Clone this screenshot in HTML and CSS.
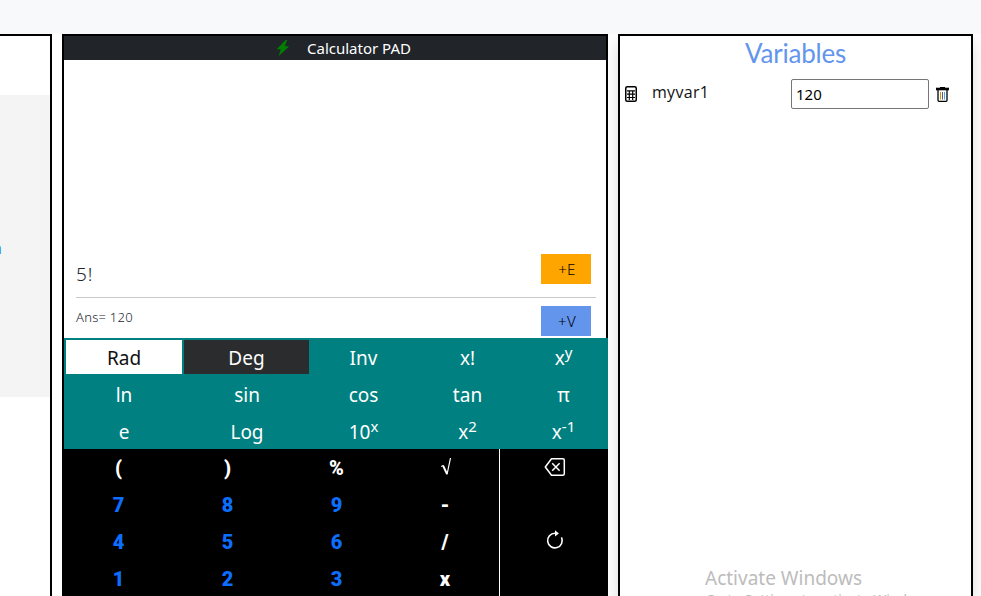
FILE: index.html
```html
<!DOCTYPE html>
<html lang="en">
<head>
<meta charset="utf-8">
<title>Calculator PAD</title>
<link rel="stylesheet" href="styles.css">
</head>
<body>
<header class="topbar"></header>
<main class="workspace">
  <section class="side-panel"><div class="side-block"><span>n</span></div></section>
  <section class="pad">
    <div class="pad-title">
      <svg class="bolt" width="14" height="16" viewBox="0 0 14 16"><path d="M9.6 0 .8 9.200h4L2.700 16 13.200 6.300H8.700L11.200 0z" fill="#008000"/></svg>
      <span>Calculator PAD</span>
    </div>
    <div class="screen">
      <div class="line expression"><span class="expr-text">5!</span><button class="add add-e">+E</button></div>
      <div class="line answer"><span class="ans-text">Ans= 120</span><button class="add add-v">+V</button></div>
    </div>
    <div class="functions">
      <div class="rad">Rad</div><div class="deg">Deg</div><div>Inv</div><div>x!</div><div><span>x<sup>y</sup></span></div>
      <div>ln</div><div>sin</div><div>cos</div><div>tan</div><div>π</div>
      <div>e</div><div>Log</div><div><span>10<sup>x</sup></span></div><div><span>x<sup>2</sup></span></div><div><span>x<sup>-1</sup></span></div>
    </div>
    <div class="keypad">
      <div class="keys">
        <div>(</div><div>)</div><div>%</div>
        <div class="root"><svg width="12" height="20" viewBox="0 0 12 20" fill="none" stroke="#fff"><path d="M1 9.500 3 8.500" stroke-width="1"/><path d="M3 8.500 7 17" stroke-width="1.900"/><path d="M7 17.500 10.500 1" stroke-width="1.200"/></svg></div>
        <div class="num">7</div><div class="num">8</div><div class="num">9</div><div>-</div>
        <div class="num">4</div><div class="num">5</div><div class="num">6</div><div>/</div>
        <div class="num">1</div><div class="num">2</div><div class="num">3</div><div>x</div>
      </div>
      <div class="actions">
        <div><svg width="22" height="20" viewBox="0 0 22 20" fill="none" stroke="#fff" stroke-width="1.500"><path d="M7.500 1.700h11.300q1.500 0 1.500 1.500v13.600q0 1.500-1.500 1.500H7.500L1.300 10z" stroke-linejoin="round"/><path d="m8.200 6.200 7.400 7.600m0-7.600-7.400 7.600"/></svg></div>
        <div><svg width="20" height="20" viewBox="0 0 20 20"><path d="M10 3.300a7.300 7.300 0 1 0 6.500 4.100" fill="none" stroke="#fff" stroke-width="1.600"/><path d="M10 .2v6.400l3.900-3.200z" fill="#fff"/></svg></div>
      </div>
    </div>
  </section>
  <section class="variables">
    <h2>Variables</h2>
    <div class="var-row">
      <svg width="12" height="16" viewBox="0 0 12 16"><rect x=".75" y=".75" width="10.500" height="14.500" rx="1.500" fill="#fff" stroke="#000" stroke-width="1.500"/><path d="M2 4.800h8M2 8.200h8M2 11.500h8M4.300 5v9M7.700 5v9" stroke="#000" stroke-width="1.200"/></svg>
      <span class="var-name">myvar1</span>
      <input type="text" value="120">
      <svg width="13" height="15" viewBox="0 0 13 15" fill="none" stroke="#000"><path d="M0 2h13" stroke-width="2.600"/><path d="M4 .6h5" stroke-width="1.200"/><path d="M2 3v10.200q0 1.100 1 1.100h7q1 0 1-1.100V3" stroke-width="1.300"/><path d="M4.500 5v7.500" stroke="#d48a20"/><path d="M6.500 5v7.500" stroke="#47608c"/><path d="M8.500 5v7.500" stroke="#45a5e6"/></svg>
    </div>
  </section>
</main>
<aside class="watermark"><div class="wm-title">Activate Windows</div><div class="wm-sub">Go to Settings to activate Windows.</div></aside>
</body>
</html>
```
FILE: styles.css
```css
* { box-sizing: border-box; }
body { margin: 0; height: 596px; overflow: hidden; background: #fff; color: #212529; font-family: "Noto Sans", "Open Sans", sans-serif; }
.topbar { height: 34px; background: #f8f9fb; }
.workspace { display: flex; height: 562px; overflow: hidden; }
.side-panel { width: 52px; border: solid #000; border-width: 2px 2px 0 0; padding-top: 59px; margin-right: 10px; }
.side-block { height: 302px; background: #f4f4f4; position: relative; overflow: hidden; }
.side-block span { position: absolute; left: -8px; top: 142px; font-size: 16px; line-height: 22px; color: #2b8bea; }
.pad { width: 546px; border: 2px solid #000; border-width: 2px 0 0 2px; margin-right: 10px; }
.pad-title { height: 24px; background: #212529; border-right: 2px solid #000; color: #fff; display: flex; align-items: center; padding-left: 212px; font-size: 15px; letter-spacing: 0; line-height: 24px; }
.bolt { margin-right: 17px; }
.screen { height: 278px; border-right: 2px solid #000; padding: 194px 10px 0 12px; }
.line { display: flex; justify-content: space-between; align-items: flex-start; padding-right: 5px; }
.expression { height: 44px; border-bottom: 1px solid #c9c9c9; }
.expression, .answer { margin-right: 0; }
.expr-text { font-size: 19px; line-height: 24px; padding-top: 8px; letter-spacing: 1px; font-weight: 350; }
.answer { padding-top: 8px; }
.ans-text { font-size: 13px; line-height: 18px; padding-top: 2px; letter-spacing: .25px; font-weight: 350; }
.add { width: 50px; height: 30px; border: 0; padding: 0 0 0 2px; font: 350 15px/30px "Noto Sans", sans-serif; letter-spacing: .4px; color: #000; }
.add-e { background: #ffa500; }
.add-v { background: #6495ed; }
.functions { height: 111px; background: #008080; color: #fff; display: grid; grid-template-columns: 119px 127px 106px 102px 90px; grid-template-rows: repeat(3, 37px); font-size: 19px; line-height: 24px; }
.functions > div { display: flex; align-items: center; justify-content: center; padding: 3px 0 0 1px; }
.functions sup { font-size: 15px; line-height: 0; vertical-align: baseline; position: relative; top: -7px; }
.functions > .rad { background: #fff; color: #111; margin: 2px 1px 1px 2px; padding: 1px 0 0; }
.functions > .deg { background: #2b2c2e; margin: 2px 1px 1px 1px; padding: 1px 0 0; }
.keypad { display: grid; grid-template-columns: 436px 108px; background: #000; color: #fff; height: 260px; }
.keys { display: grid; grid-template-columns: 109px 109px 109px 108px; grid-auto-rows: 37px; align-content: start; border-right: 1px solid #fff; font: 900 20px/37px Roboto, sans-serif; }
.keys > div { display: flex; justify-content: center; align-items: center; padding-top: 2px; }
.keys > .root { padding: 0 0 2px 2px; }
.keys .num { color: #0d6efd; }
.actions { display: grid; grid-auto-rows: 74px; align-content: start; justify-items: center; }
.actions div { padding: 8px 0 0 2px; }
.actions div + div { padding-top: 7px; }
.variables { width: 355px; border: solid #000; border-width: 2px 2px 0; background: #fff; box-shadow: 0 8px 16px rgba(0, 0, 0, .15); }
.variables h2 { margin: 0; text-align: center; color: #6495ed; font: 400 26px/34px Lato, sans-serif; letter-spacing: -.2px; }
.var-row { display: flex; align-items: center; margin-top: 9px; padding-left: 5px; height: 30px; }
.var-name { width: 139px; margin-left: 15px; font: 400 16px/24px "Open Sans", sans-serif; letter-spacing: .3px; color: #111; padding-bottom: 4px; }
.var-row input { width: 138px; height: 30px; margin-right: 7px; border: 1px solid #767676; border-radius: 2px; padding: 1px 4px; font: 15px "Noto Sans", sans-serif; color: #000; }
.watermark { position: absolute; left: 705px; top: 565px; height: 31px; overflow: hidden; color: #bcbcbc; white-space: nowrap; }
.wm-title { font-size: 19px; line-height: 26px; letter-spacing: 0; }
.wm-sub { font-size: 14px; line-height: 18px; letter-spacing: 0; }
```
